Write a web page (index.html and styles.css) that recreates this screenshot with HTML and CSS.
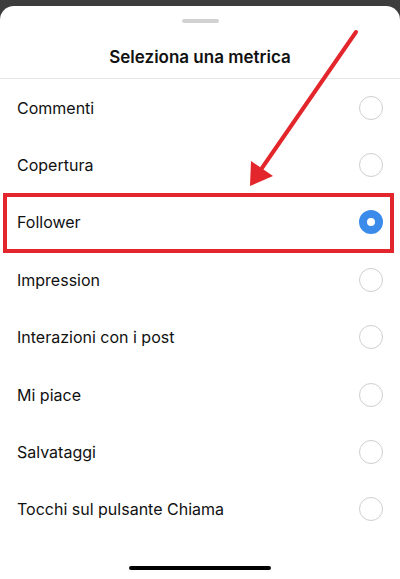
FILE: index.html
```html
<!DOCTYPE html>
<html lang="it">
<head>
  <meta charset="UTF-8">
  <title>Seleziona una metrica</title>
  <meta name="viewport" content="width=device-width, initial-scale=1.0">
  <link rel="stylesheet" href="styles.css">
</head>
<body>
  <div class="sheet">
    <header>
      <div class="handle"></div>
      <h2>Seleziona una metrica</h2>
    </header>

    <ul class="metriche">
      <li><span>Commenti</span><i class="radio"></i></li>
      <li><span>Copertura</span><i class="radio"></i></li>
      <li class="evidenziato"><span>Follower</span><i class="radio attivo"></i></li>
      <li><span>Impression</span><i class="radio"></i></li>
      <li><span>Interazioni con i post</span><i class="radio"></i></li>
      <li><span>Mi piace</span><i class="radio"></i></li>
      <li><span>Salvataggi</span><i class="radio"></i></li>
      <li><span>Tocchi sul pulsante Chiama</span><i class="radio"></i></li>
    </ul>

    <div class="home-bar"></div>
  </div>

  <svg class="freccia" width="400" height="579" viewBox="0 0 400 579">
    <line x1="356" y1="32" x2="262" y2="168" stroke="#e3262b" stroke-width="4" stroke-linecap="round"/>
    <polygon points="250,186 251,161 273,176" fill="#e3262b"/>
  </svg>
</body>
</html>
```
FILE: styles.css
```css
* {
  margin: 0;
  padding: 0;
  box-sizing: border-box;
}

body {
  font-family: "Inter", "Liberation Sans", Arial, sans-serif;
  background-color: #3d3d3d;
  width: 400px;
  height: 579px;
  overflow: hidden;
  position: relative;
}

.sheet {
  margin-top: 6px;
  height: 573px;
  background-color: #fff;
  border-radius: 14px 14px 0 0;
  display: flex;
  flex-direction: column;
}

header {
  height: 73px;
  border-bottom: 1px solid #e6e6e6;
  display: flex;
  flex-direction: column;
  align-items: center;
  padding-top: 13px;
}

.handle {
  width: 37px;
  height: 4px;
  border-radius: 2px;
  background-color: #d2d2d2;
}

h2 {
  margin-top: 24px;
  font-size: 17px;
  font-weight: 600;
  color: #111;
}

.metriche {
  list-style: none;
}

.metriche li {
  height: 57.4px;
  display: flex;
  align-items: center;
  justify-content: space-between;
  padding: 0 17px;
  font-size: 16px;
  color: #111;
  position: relative;
}

.evidenziato::after {
  content: "";
  position: absolute;
  left: 3px;
  right: 6px;
  top: -1px;
  bottom: -2px;
  border: 4px solid #e3262b;
}

.radio {
  width: 24px;
  height: 24px;
  border-radius: 50%;
  border: 1.5px solid #cfcfcf;
}

.radio.attivo {
  border: 8px solid #3a8bea;
  background-color: #fff;
}

.home-bar {
  margin: auto auto 9px;
  width: 142px;
  height: 4px;
  border-radius: 2px;
  background-color: #000;
}

.freccia {
  position: absolute;
  left: 0;
  top: 0;
  pointer-events: none;
}
```
